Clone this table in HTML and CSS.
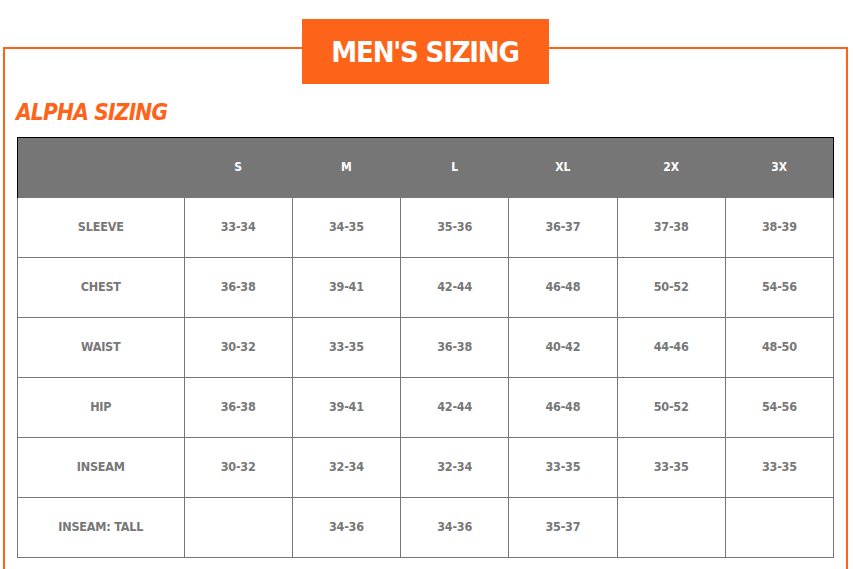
FILE: index.html
```html
<!DOCTYPE html>
<html>
<head>
<meta charset="utf-8">
<link rel="stylesheet" href="styles.css">
</head>
<body>
<div class="frame">
  <div class="title">MEN'S SIZING</div>
  <h2 class="section">ALPHA SIZING</h2>
  <table class="chart">
    <thead>
      <tr><th class="label"></th><th>S</th><th>M</th><th>L</th><th>XL</th><th>2X</th><th>3X</th></tr>
    </thead>
    <tbody>
      <tr><td class="label">SLEEVE</td><td>33-34</td><td>34-35</td><td>35-36</td><td>36-37</td><td>37-38</td><td>38-39</td></tr>
      <tr><td class="label">CHEST</td><td>36-38</td><td>39-41</td><td>42-44</td><td>46-48</td><td>50-52</td><td>54-56</td></tr>
      <tr><td class="label">WAIST</td><td>30-32</td><td>33-35</td><td>36-38</td><td>40-42</td><td>44-46</td><td>48-50</td></tr>
      <tr><td class="label">HIP</td><td>36-38</td><td>39-41</td><td>42-44</td><td>46-48</td><td>50-52</td><td>54-56</td></tr>
      <tr><td class="label">INSEAM</td><td>30-32</td><td>32-34</td><td>32-34</td><td>33-35</td><td>33-35</td><td>33-35</td></tr>
      <tr><td class="label">INSEAM: TALL</td><td></td><td>34-36</td><td>34-36</td><td>35-37</td><td></td><td></td></tr>
    </tbody>
  </table>
</div>
</body>
</html>
```
FILE: styles.css
```css
html, body {
  margin: 0;
  padding: 0;
  background: #fff;
}
body {
  font-family: "DejaVu Sans Condensed", "DejaVu Sans", sans-serif;
  font-stretch: condensed;
  height: 569px;
  overflow: hidden;
}
.frame {
  margin: 47px 0 0 3px;
  height: 522px;
  border: 2px solid #fe6419;
  border-bottom: 0;
  display: flex;
  flex-direction: column;
  padding: 0 13px 0 12px;
  box-sizing: border-box;
  width: 845px;
}
.title {
  align-self: center;
  margin-top: -30px;
  width: 247px;
  height: 65px;
  flex: none;
  background: #fe6419;
  color: #fff;
  font-weight: bold;
  font-size: 29px;
  letter-spacing: -1.2px;
  display: flex;
  align-items: center;
  justify-content: center;
}
.section {
  margin: 14px 0 0 -1px;
  color: #fe6419;
  font-style: italic;
  font-weight: bold;
  font-size: 22.5px;
  letter-spacing: -0.8px;
  line-height: 28px;
  height: 28px;
  flex: none;
}
.chart {
  margin-top: 11px;
  width: 817px;
  border-collapse: collapse;
  table-layout: fixed;
  flex: none;
}
.chart th, .chart td {
  text-align: center;
  font-weight: bold;
  padding: 0 0 2px;
  height: 57px;
}
.chart th {
  background: #767676;
  color: #fff;
  font-size: 12px;
  border-top: 1px solid #000;
}
.chart th:first-child { border-left: 1px solid #000; }
.chart th:last-child { border-right: 1px solid #000; }
.chart th.label { width: 166px; }
.chart td {
  color: #777;
  font-size: 12.5px;
  letter-spacing: -0.2px;
  border: 1px solid #777;
}
```
